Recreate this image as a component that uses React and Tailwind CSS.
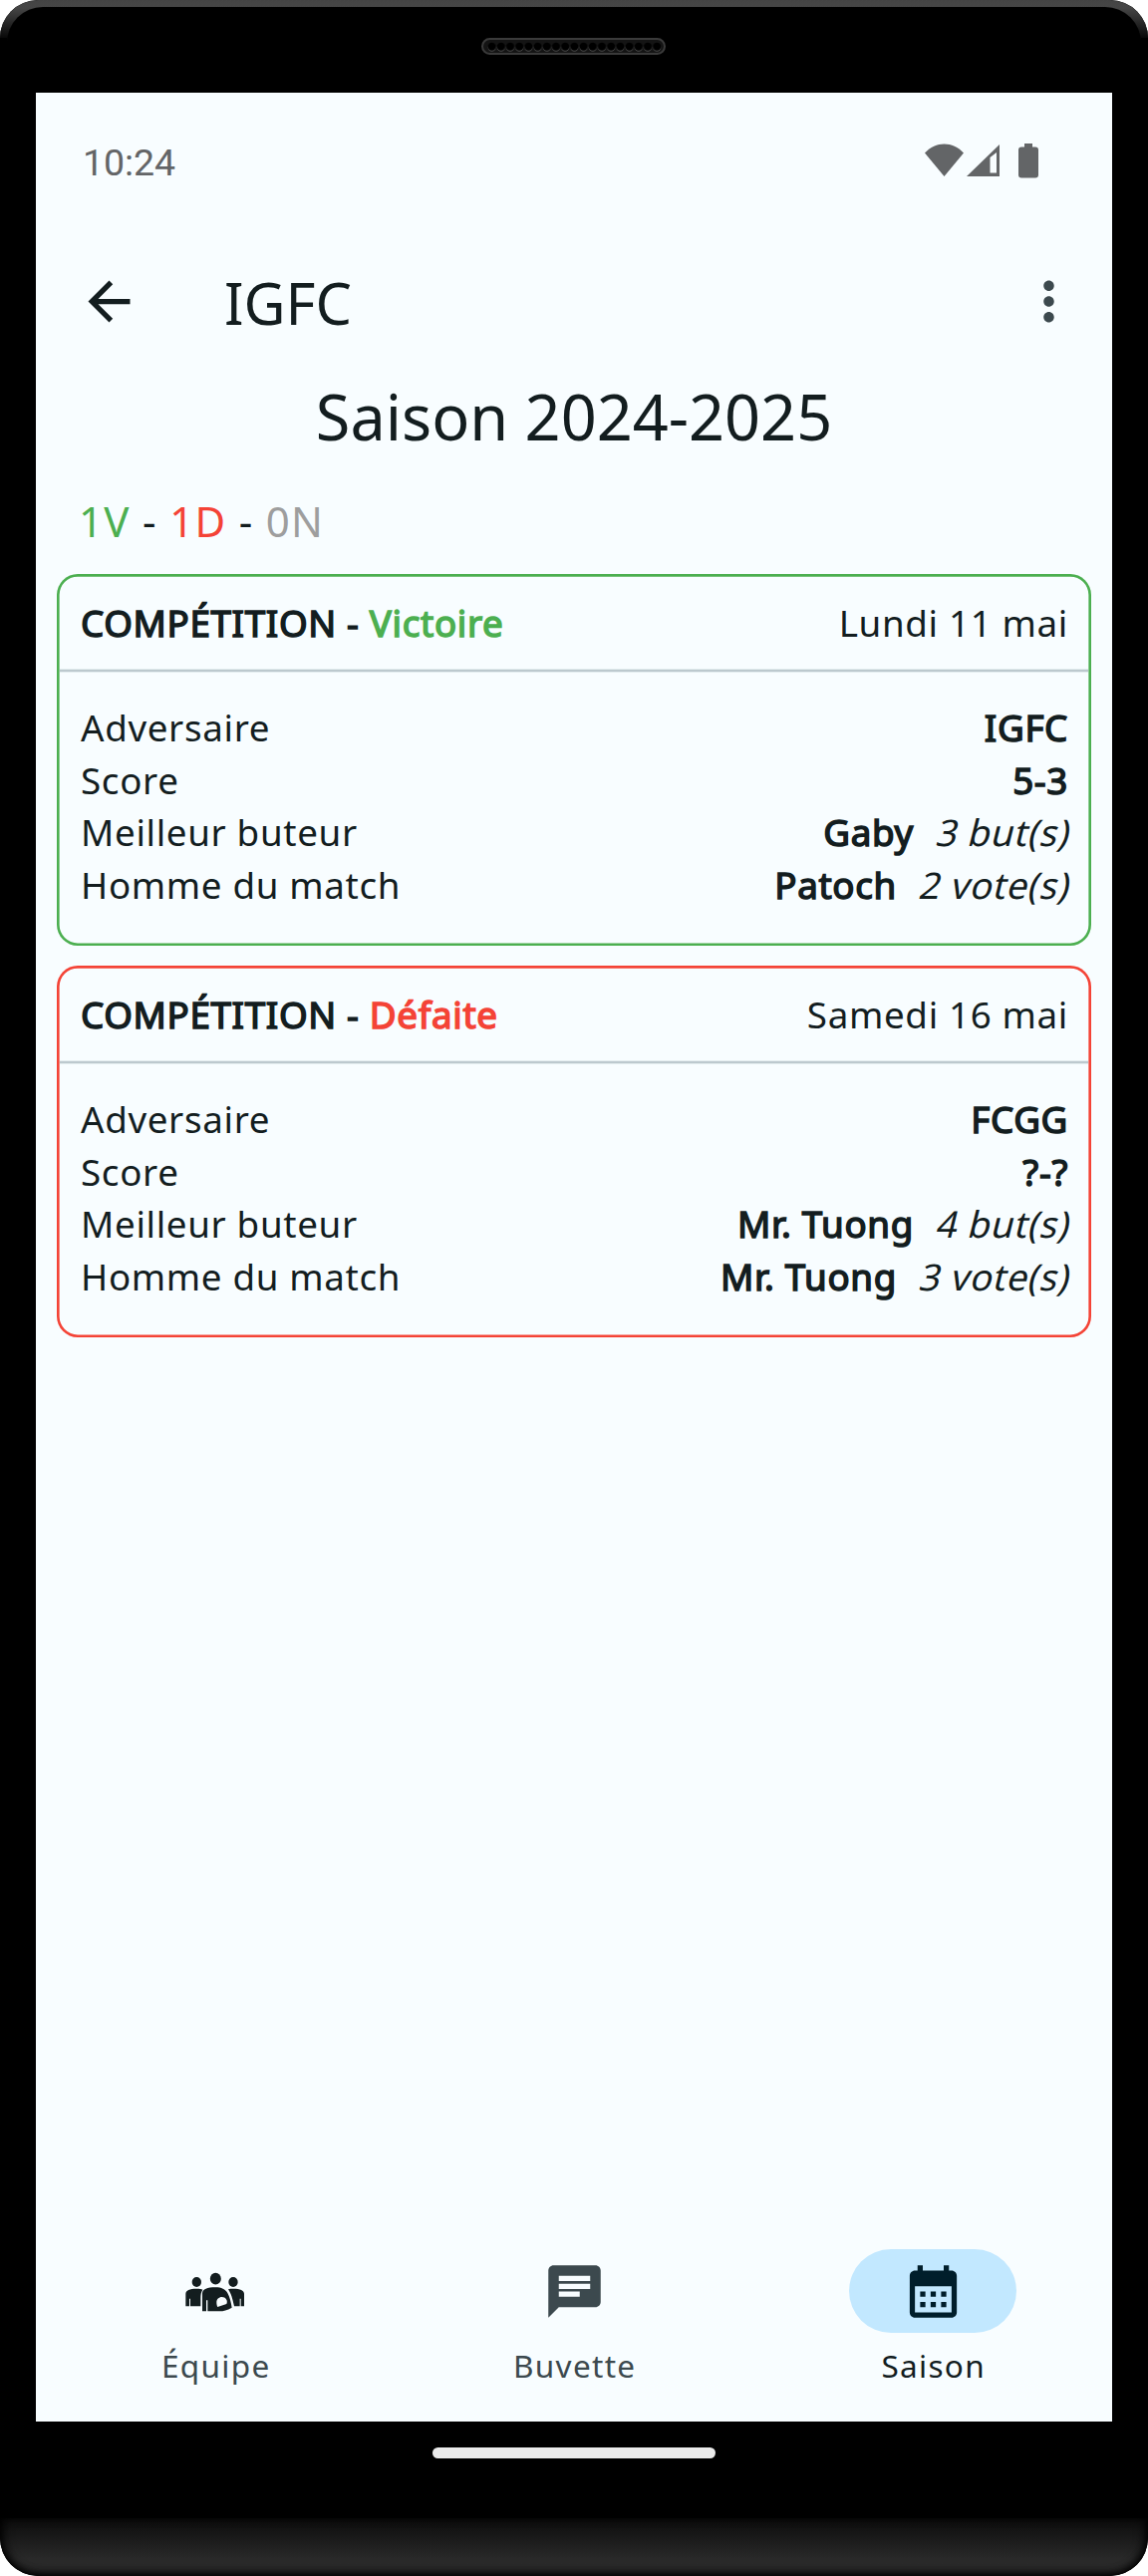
const CALENDAR = "M19 4h-1V2h-2v2H8V2H6v2H5c-1.11 0-1.99.9-1.99 2L3 20c0 1.1.89 2 2 2h14c1.1 0 2-.9 2-2V6c0-1.1-.9-2-2-2zm0 16H5V10h14v10zM9 14H7v-2h2v2zm4 0h-2v-2h2v2zm4 0h-2v-2h2v2zm-8 4H7v-2h2v2zm4 0h-2v-2h2v2zm4 0h-2v-2h2v2z";

const Icon = ({ d, className }) => (
  <svg viewBox="0 0 24 24" className={`size-[63px] fill-current ${className || ""}`}>
    <path d={d} />
  </svg>
);

const TeamIcon = () => (
  <svg viewBox="0 0 180 120" className="mt-px h-10 w-[60px] fill-current">
    <ellipse cx="34" cy="30" rx="14" ry="15" />
    <ellipse cx="144" cy="30" rx="14" ry="15" />
    <ellipse cx="91" cy="20" rx="16.500" ry="17.500" />
    <path d="M1 103V65C2 55 12 50 34 50c9 0 14 1 18 3-5 8-6 16-6 25v25H15V80h-3v23z" />
    <path d="M177 103V65C176 55 166 50 144 50c-6 0-10 0-15 2 9 13 13 28 18 51h17V80h3v23z" />
    <path fillRule="evenodd" d="M51 118V64C52 51 66 46 91 46c18 0 29 6 36 17 7 13 10 26 13 44-14 8-26 11-36 11H67V85h-4v33zM110 75c-9 0-16 7-16 16 0 6 1 10 3 14l27-9c5-10-3-21-14-21z" />
  </svg>
);

const Speaker = () => (
  <svg viewBox="0 0 185 17" className="h-[17px] w-[185px]">
    <defs>
      <pattern id="holes" width="9.200" height="17" x="6" patternUnits="userSpaceOnUse">
        <circle cx="4.600" cy="9.700" r="4" fill="#4a4a4a" />
        <circle cx="4.600" cy="8.700" r="4" fill="#000" />
      </pattern>
    </defs>
    <rect x="1" y="1" width="183" height="15" rx="7.500" fill="#141414" stroke="#3a3a3a" strokeWidth="2" />
    <rect x="6" y="2" width="174.800" height="13" fill="url(#holes)" />
  </svg>
);

const Strong = ({ children }) => (
  <span className="[-webkit-text-stroke:1.500px_currentColor]">{children}</span>
);

const Row = ({ label, value, note }) => (
  <div className="flex h-[52.500px] items-center justify-between">
    <span>{label}</span>
    <span className="flex gap-[21px]">
      <Strong>{value}</Strong>
      {note && <span className="inline-block origin-[50%_72%] -skew-x-[14deg]">{note}</span>}
    </span>
  </div>
);

const Match = ({ frame, color, result, date, opponent, score, scorer, goals, man, votes }) => (
  <section className={`h-[373px] rounded-[21px] ${frame}`}>
    <div className="flex h-[95px] items-center justify-between pl-6 pr-[23px] pt-[4px]">
      <Strong>
        COMPÉTITION - <span className={color}>{result}</span>
      </Strong>
      <span>{date}</span>
    </div>
    <div className="mx-[2.625px] h-1 border-y border-[#e4edf0] bg-[#bcc9ce]" />
    <div className="pl-6 pr-[23px] pt-[29.500px]">
      <Row label="Adversaire" value={opponent} />
      <Row label="Score" value={score} />
      <Row label="Meilleur buteur" value={scorer} note={goals} />
      <Row label="Homme du match" value={man} note={votes} />
    </div>
  </section>
);

const Tab = ({ label, active, children }) => (
  <div className={`flex flex-1 flex-col items-center ${active ? "text-[#131d1f]" : "text-[#3c494e]"}`}>
    <div className={`flex h-[84px] w-[168px] items-center justify-center rounded-full ${active ? "bg-[#c2e8ff] text-[#001e2b]" : ""}`}>
      {children}
    </div>
    <span className="mt-[12px] pl-[1.500px] text-[31.500px] leading-[42px] tracking-[1.310px]">{label}</span>
  </div>
);

export default function App() {
  return (
    <div className="h-[2585px] w-[1152px] bg-white font-['Noto_Sans',sans-serif] text-[#131d1f]">
      <div className="relative flex h-full flex-col items-center overflow-hidden rounded-[38px] bg-black">
        <div className="absolute inset-x-0 top-0 h-[100px] rounded-t-[38px] bg-linear-to-b from-[#434343] to-[#555] to-[8px]">
          <div className="h-full bg-linear-to-b from-transparent to-black to-[42px]" />
        </div>
        <div className="absolute inset-x-[7px] top-[7px] h-[100px] rounded-t-[36px] bg-black" />
        <div className="absolute left-0 top-[38px] h-20 w-[7px] bg-black" />
        <div className="absolute right-0 top-[38px] h-20 w-[7px] bg-black" />
        <div className="relative flex h-[93px] items-start pr-[2px] pt-[38px]">
          <Speaker />
        </div>
        <main className="relative flex h-[2337px] w-[1080px] shrink-0 flex-col bg-[#f8fdff]">
          <div className="flex h-[137px] items-center justify-between pl-[47px] pr-[74px] text-[#636567]">
            <span className="pt-1 font-[Roboto] text-[37.500px] tracking-[-0.100px]">10:24</span>
            <svg viewBox="0 0 114 36" className="h-9 w-[114px] fill-current">
              <path d="M0 9.500C11-2.500 28-2.500 39 9.500L19.500 33z" />
              <path fillRule="evenodd" d="M42 33L75 1v32zM65.500 14v15.500h6.500V9z" />
              <path d="M100 0h8v3.500h3q3 0 3 3v25q0 3-3 3h-14q-3 0-3-3v-25q0-3 3-3h3z" />
            </svg>
          </div>
          <div className="flex h-[145px] items-center pl-[42px] pr-[32px]">
            <Icon d="M20 11H7.830l5.590-5.590L12 4l-8 8 8 8 1.410-1.410L7.830 13H20v-2z" />
            <span className="ml-[84px] flex-1 pt-[2px] text-[57.750px] leading-[74px]">IGFC</span>
            <Icon className="text-[#3c494e]" d="M12 8c1.100 0 2-.9 2-2s-.9-2-2-2-2 .9-2 2 .9 2 2 2zm0 2c-1.100 0-2 .9-2 2s.9 2 2 2 2-.9 2-2-.9-2-2-2zm0 6c-1.100 0-2 .9-2 2s.9 2 2 2 2-.9 2-2-.9-2-2-2z" />
          </div>
          <h1 className="mt-px text-center text-[63px] leading-[84px]">Saison 2024-2025</h1>
          <p className="mt-[31px] pl-[43px] text-[42px] leading-[63px] tracking-[1.310px]">
            <span className="text-[#4caf50]">1V</span> - <span className="text-[#f44336]">1D</span> - <span className="text-[#9e9e9e]">0N</span>
          </p>
          <div className="mt-[22px] flex flex-col gap-5 px-[21px] text-[36.750px] tracking-[0.660px]">
            <Match frame="shadow-[inset_0_0_0_2.625px_#4caf50]" color="text-[#4caf50]" result="Victoire" date="Lundi 11 mai" opponent="IGFC" score="5-3" scorer="Gaby" goals="3 but(s)" man="Patoch" votes="2 vote(s)" />
            <Match frame="shadow-[inset_0_0_0_2.625px_#f44336]" color="text-[#f44336]" result="Défaite" date="Samedi 16 mai" opponent="FCGG" score="?-?" scorer="Mr. Tuong" goals="4 but(s)" man="Mr. Tuong" votes="3 vote(s)" />
          </div>
          <nav className="mt-auto flex h-[173px]">
            <Tab label="Équipe">
              <span className="text-[#131d1f]"><TeamIcon /></span>
            </Tab>
            <Tab label="Buvette">
              <Icon d="M20 2H4c-1.100 0-1.990.9-1.990 2L2 22l4-4h14c1.100 0 2-.9 2-2V4c0-1.100-.9-2-2-2zM6 9h12v2H6V9zm8 5H6v-2h8v2zm4-6H6V6h12v2z" />
            </Tab>
            <Tab label="Saison" active>
              <Icon d={CALENDAR} />
            </Tab>
          </nav>
        </main>
        <div className="mt-[26px] h-[11px] w-[284px] shrink-0 rounded-full bg-[#ebebeb]" />
        <div className="mt-auto h-[58px] w-full shrink-0 rounded-b-[38px] bg-linear-to-b from-[#0c0c0c] to-[#292929] to-70% shadow-[inset_0_-4px_8px_-2px_#000,inset_6px_0_12px_-4px_#000,inset_-6px_0_12px_-4px_#000]" />
      </div>
    </div>
  );
}
